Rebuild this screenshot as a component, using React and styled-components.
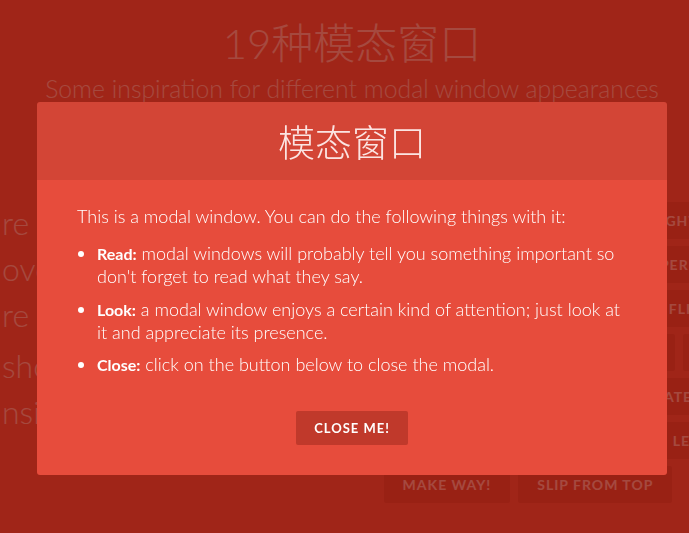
import styled, { createGlobalStyle } from 'styled-components';

const GlobalStyle = createGlobalStyle`
  html, body {
    margin: 0;
    padding: 0;
    height: 100%;
    overflow: hidden;
  }
  body {
    background: #e74c3c;
    color: #fff;
    font-family: Lato, "Noto Sans CJK SC", sans-serif;
  }
`;

const rows = [
  ['Fade in & Scale', 'Slide in from right'],
  ['Sticky Up', '3D Slit', 'Newspaper'],
  ['Sticky Up', 'Blur', 'Slide in (bottom)', '3D Flip (horizontal)'],
  ['3D Flip (vertical)', '3D Sign', 'Slip from top', 'Super Scaled'],
  ['Just Me', 'Sticky Up', 'Fall', '3D Rotate Bottom'],
  ['3D Rotate In Left', 'Fade in & Scale', 'Let me in'],
  ['Make way!', 'Slip from top'],
];

const leftText = [
  ['re are many possible ways', 'overlays could appear on', 're some modern ideas'],
  ['showing them with CSS', 'nsitions and animations.'],
];

export default function App() {
  return (
    <>
      <GlobalStyle />
      <Page>
        <Header>
          <Title>19种模态窗口</Title>
          <Subtitle>Some inspiration for different modal window appearances</Subtitle>
        </Header>
        <Main>
          <LeftColumn>
            {leftText.map((para, i) => (
              <Para key={i}>
                {para.map((line) => (
                  <Line key={line}>{line}</Line>
                ))}
              </Para>
            ))}
          </LeftColumn>
          <RightColumn>
            {rows.map((row, i) => (
              <TriggerRow key={i}>
                {row.map((label) => (
                  <Trigger key={label}>{label}</Trigger>
                ))}
              </TriggerRow>
            ))}
          </RightColumn>
        </Main>
      </Page>

      <Overlay />

      <Modal>
        <ModalTitle>模态窗口</ModalTitle>
        <ModalBody>
          <Intro>This is a modal window. You can do the following things with it:</Intro>
          <List>
            <Item>
              <strong>Read:</strong> modal windows will probably tell you something important so
              don't forget to read what they say.
            </Item>
            <Item>
              <strong>Look:</strong> a modal window enjoys a certain kind of attention; just look at
              it and appreciate its presence.
            </Item>
            <Item>
              <strong>Close:</strong> click on the button below to close the modal.
            </Item>
          </List>
          <CloseButton>Close me!</CloseButton>
        </ModalBody>
      </Modal>
    </>
  );
}

const Page = styled.div`
  width: 704px;
`;

const Header = styled.header`
  padding-top: 14px;
  text-align: center;
`;

const Title = styled.h1`
  margin: 0;
  font-size: 42px;
  line-height: 58px;
  font-weight: 300;
`;

const Subtitle = styled.p`
  margin: 0;
  font-size: 24.8px;
  line-height: 34px;
  font-weight: 300;
`;

const Main = styled.main`
  display: grid;
  grid-template-columns: 352px 352px;
  padding-top: 96px;
`;

const LeftColumn = styled.div`
  padding-left: 2px;
  display: flex;
  flex-direction: column;
  gap: 5px;
  margin-top: -2px;
`;

const Para = styled.p`
  margin: 0;
`;

const Line = styled.span`
  display: block;
  white-space: nowrap;
  font-size: 32px;
  line-height: 46px;
  font-weight: 300;
`;

const RightColumn = styled.div`
  display: flex;
  flex-direction: column;
  gap: 7px;
`;

const TriggerRow = styled.div`
  display: flex;
  justify-content: center;
  gap: 8px;
`;

const Trigger = styled.button`
  flex: none;
  border: none;
  border-radius: 2px;
  padding: 10px 19px;
  background: #c0392b;
  color: #fff;
  font-family: Lato, sans-serif;
  font-size: 14px;
  line-height: 17px;
  font-weight: 700;
  letter-spacing: 1px;
  text-transform: uppercase;
  white-space: nowrap;
`;

const Overlay = styled.div`
  position: fixed;
  inset: 0;
  background: rgba(143, 27, 15, 0.8);
`;

const Modal = styled.div`
  position: fixed;
  top: 102px;
  left: 37px;
  width: 630px;
  background: #e74c3c;
  border-radius: 3px;
  overflow: hidden;
`;

const ModalTitle = styled.h3`
  margin: 0;
  height: 78px;
  display: flex;
  align-items: center;
  justify-content: center;
  background: rgba(0, 0, 0, 0.1);
  font-family: "Noto Sans CJK SC", sans-serif;
  font-size: 37px;
  font-weight: 300;
  opacity: 0.85;
`;

const ModalBody = styled.div`
  padding: 25px 40px 30px;
  display: flex;
  flex-direction: column;
  font-size: 18px;
  line-height: 22px;
  font-weight: 300;
`;

const Intro = styled.p`
  margin: 0;
`;

const List = styled.ul`
  margin: 10px 0 0;
  padding-left: 20px;

  strong {
    font-weight: 700;
    font-size: 16px;
  }
`;

const Item = styled.li`
  padding: 5px 0 5.5px;
`;

const CloseButton = styled.button`
  align-self: center;
  margin-top: 29px;
  border: none;
  border-radius: 2px;
  padding: 0 18px;
  height: 34px;
  background: #c0392b;
  color: #fff;
  font-family: Lato, sans-serif;
  font-size: 13px;
  font-weight: 700;
  letter-spacing: 1px;
  text-transform: uppercase;
`;
